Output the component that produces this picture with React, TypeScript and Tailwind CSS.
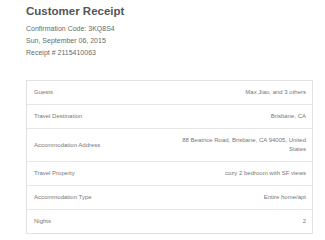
export default function App() {
  const rows: [string, string][] = [
    ["Guests", "Max Jiao, and 3 others"],
    ["Travel Destination", "Brisbane, CA"],
    ["Accommodation Address", "88 Beatrice Road, Brisbane, CA 94005, United States"],
    ["Travel Property", "cozy 2 bedroom with SF views"],
    ["Accommodation Type", "Entire home/apt"],
    ["Nights", "2"],
  ];
  return (
    <div
      className="w-[325px] h-[240px] bg-white overflow-hidden"
      style={{ fontFamily: '"Liberation Sans", Arial, sans-serif' }}
    >
      <div className="pl-[26px] pr-[12px] pt-[4px]">
        <h1 className="text-[11.5px] leading-[14px] font-bold text-[#555]">Customer Receipt</h1>
        <div className="mt-[5px] flex flex-col text-[7px] leading-[12px] text-[#6a6a6a]">
          <div>Confirmation Code: 3KQ8S4</div>
          <div>Sun, September 06, 2015</div>
          <div>Receipt # 2115410063</div>
        </div>
        <div className="mt-[21px] border border-[#e2e2e2]">
          {rows.map(([label, value], i) => (
            <div
              key={label}
              className={`flex justify-between items-center pl-[7px] pr-[6px] py-[7px] text-[6px] leading-[9px] text-[#777] ${
                i > 0 ? "border-t border-[#e6e6e6]" : ""
              }`}
            >
              <div>{label}</div>
              <div className="max-w-[132px] text-right">{value}</div>
            </div>
          ))}
        </div>
      </div>
    </div>
  );
}
